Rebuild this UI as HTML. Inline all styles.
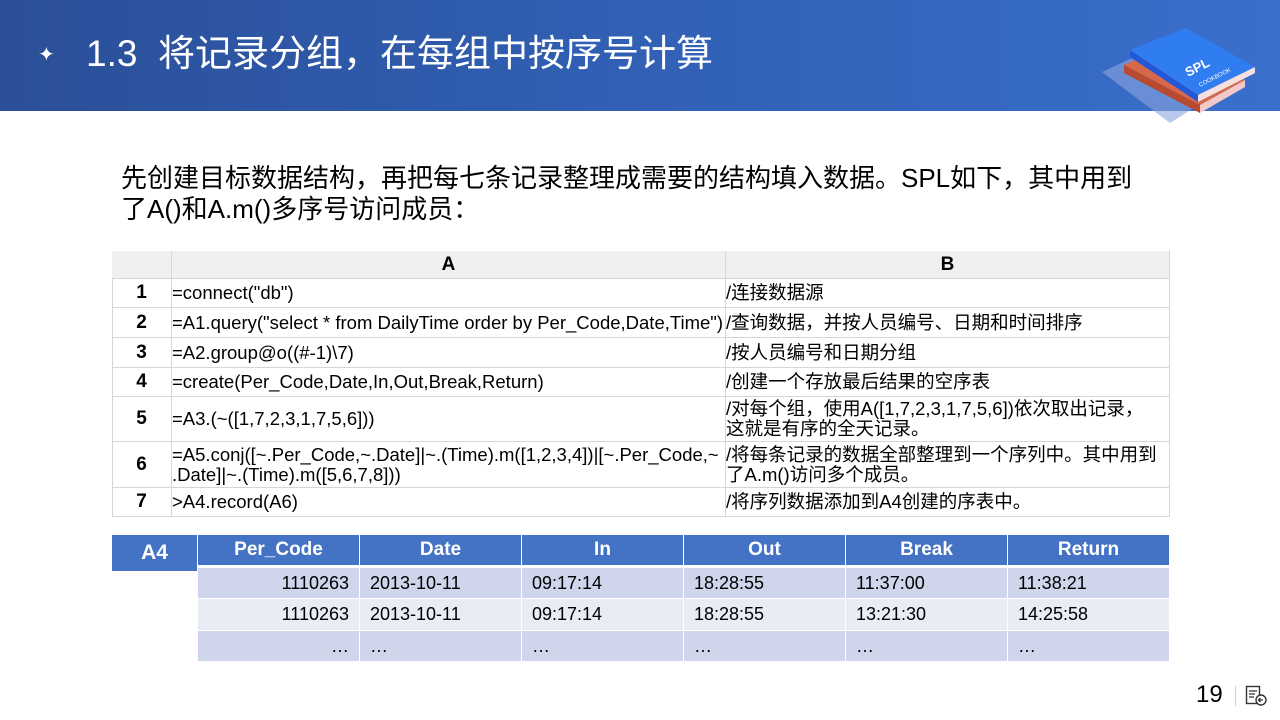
<!DOCTYPE html>
<html><head><meta charset="utf-8"><style>
*{margin:0;padding:0;box-sizing:border-box}
body{width:1280px;height:720px;overflow:hidden;background:#fff;position:relative;font-family:"Liberation Sans","Noto Sans CJK SC",sans-serif;color:#000}
.hdr{position:absolute;left:0;top:0;width:1280px;height:111px;background:linear-gradient(90deg,#2b4f98 0%,#3160b5 50%,#3a6fcc 100%)}
.title{position:absolute;left:86px;top:30px;color:#fff;font-size:37px;line-height:48px;white-space:nowrap}
.star{position:absolute;left:38px;top:42px;color:#fff;font-size:20px}
.p{position:absolute;left:121px;top:163px;font-size:26px;line-height:31px;width:1045px}
.c{position:absolute;font-size:18.5px;line-height:20px;display:flex;align-items:center;border-right:1px solid #d6d6d6;border-bottom:1px solid #d6d6d6;white-space:nowrap;overflow:visible}
.n{justify-content:center;font-weight:bold;font-size:19px}
.g{background:#f0f0f0;justify-content:center;font-weight:bold;font-size:19px}
.t{position:absolute;font-size:18px;display:flex;align-items:center;padding:0 10px}
.h{background:#4472c4;color:#fff;font-weight:bold;justify-content:center;font-size:19px}
.r1{background:#cfd5ea}.r2{background:#e9ebf5}
</style></head><body>
<div class="hdr"></div>
<div class="star">✦</div>
<div class="title">1.3&nbsp; 将记录分组，在每组中按序号计算</div>
<svg style="position:absolute;left:1100px;top:15px" width="160" height="110" viewBox="0 0 160 110">
<polygon points="2,57 60,30 130,70 70,108" fill="#8aa5e0" opacity="0.6"/>
<polygon points="24,50 70,30 145,65 100,90" fill="#d8684a"/>
<polygon points="24,50 100,90 100,98 24,58" fill="#b84a30"/>
<polygon points="100,90 145,65 145,72 100,98" fill="#f2c8c8"/>
<polygon points="30,35 86,13 155,52 98,80" fill="#2f7df0"/>
<polygon points="30,35 98,80 98,87 30,42" fill="#2258d8"/>
<polygon points="98,80 155,52 155,58 98,87" fill="#f5e0e0"/>
<text x="88" y="62" fill="#fff" font-size="13" font-weight="bold" transform="rotate(-27 88 62)" font-family="Liberation Sans">SPL</text>
<text x="100" y="72" fill="#fff" font-size="6" transform="rotate(-27 100 72)" font-family="Liberation Sans">COOKBOOK</text>
</svg>
<div class="p">先创建目标数据结构，再把每七条记录整理成需要的结构填入数据。SPL如下，其中用到<br>了A()和A.m()多序号访问成员：</div>
<div style="position:absolute;left:112px;top:251px;width:1058px;height:266px;border-top:1px solid #d6d6d6;border-left:1px solid #d6d6d6"></div>
<div class="c g" style="left:112px;top:251px;width:60px;height:28px"></div>
<div class="c g" style="left:172px;top:251px;width:554px;height:28px">A</div>
<div class="c g" style="left:726px;top:251px;width:444px;height:28px">B</div>

<div class="c n" style="left:112px;top:279px;width:60px;height:29px">1</div>
<div class="c" style="left:172px;top:279px;width:554px;height:29px">=connect("db")</div>
<div class="c" style="left:726px;top:279px;width:444px;height:29px">/连接数据源</div>

<div class="c n" style="left:112px;top:308px;width:60px;height:30px">2</div>
<div class="c" style="left:172px;top:308px;width:554px;height:30px">=A1.query("select * from DailyTime order by Per_Code,Date,Time")</div>
<div class="c" style="left:726px;top:308px;width:444px;height:30px">/查询数据，并按人员编号、日期和时间排序</div>

<div class="c n" style="left:112px;top:338px;width:60px;height:30px">3</div>
<div class="c" style="left:172px;top:338px;width:554px;height:30px">=A2.group@o((#-1)\7)</div>
<div class="c" style="left:726px;top:338px;width:444px;height:30px">/按人员编号和日期分组</div>

<div class="c n" style="left:112px;top:368px;width:60px;height:29px">4</div>
<div class="c" style="left:172px;top:368px;width:554px;height:29px">=create(Per_Code,Date,In,Out,Break,Return)</div>
<div class="c" style="left:726px;top:368px;width:444px;height:29px">/创建一个存放最后结果的空序表</div>

<div class="c n" style="left:112px;top:397px;width:60px;height:45px">5</div>
<div class="c" style="left:172px;top:397px;width:554px;height:45px">=A3.(~([1,7,2,3,1,7,5,6]))</div>
<div class="c" style="left:726px;top:397px;width:444px;height:45px">/对每个组，使用A([1,7,2,3,1,7,5,6])依次取出记录，<br>这就是有序的全天记录。</div>

<div class="c n" style="left:112px;top:442px;width:60px;height:46px">6</div>
<div class="c" style="left:172px;top:442px;width:554px;height:46px">=A5.conj([~.Per_Code,~.Date]|~.(Time).m([1,2,3,4])|[~.Per_Code,~<br>.Date]|~.(Time).m([5,6,7,8]))</div>
<div class="c" style="left:726px;top:442px;width:444px;height:46px">/将每条记录的数据全部整理到一个序列中。其中用到<br>了A.m()访问多个成员。</div>

<div class="c n" style="left:112px;top:488px;width:60px;height:29px">7</div>
<div class="c" style="left:172px;top:488px;width:554px;height:29px">&gt;A4.record(A6)</div>
<div class="c" style="left:726px;top:488px;width:444px;height:29px">/将序列数据添加到A4创建的序表中。</div>

<div class="t h" style="left:112px;top:535px;width:85px;height:36px;font-size:21px">A4</div>
<div class="t h" style="left:198px;top:535px;width:161px;height:30px">Per_Code</div>
<div class="t h" style="left:360px;top:535px;width:161px;height:30px">Date</div>
<div class="t h" style="left:522px;top:535px;width:161px;height:30px">In</div>
<div class="t h" style="left:684px;top:535px;width:161px;height:30px">Out</div>
<div class="t h" style="left:846px;top:535px;width:161px;height:30px">Break</div>
<div class="t h" style="left:1008px;top:535px;width:161px;height:30px">Return</div>

<div class="t r1" style="left:198px;top:568px;width:161px;height:30px;justify-content:flex-end">1110263</div>
<div class="t r1" style="left:360px;top:568px;width:161px;height:30px">2013-10-11</div>
<div class="t r1" style="left:522px;top:568px;width:161px;height:30px">09:17:14</div>
<div class="t r1" style="left:684px;top:568px;width:161px;height:30px">18:28:55</div>
<div class="t r1" style="left:846px;top:568px;width:161px;height:30px">11:37:00</div>
<div class="t r1" style="left:1008px;top:568px;width:161px;height:30px">11:38:21</div>

<div class="t r2" style="left:198px;top:599px;width:161px;height:31px;justify-content:flex-end">1110263</div>
<div class="t r2" style="left:360px;top:599px;width:161px;height:31px">2013-10-11</div>
<div class="t r2" style="left:522px;top:599px;width:161px;height:31px">09:17:14</div>
<div class="t r2" style="left:684px;top:599px;width:161px;height:31px">18:28:55</div>
<div class="t r2" style="left:846px;top:599px;width:161px;height:31px">13:21:30</div>
<div class="t r2" style="left:1008px;top:599px;width:161px;height:31px">14:25:58</div>

<div class="t r1" style="left:198px;top:631px;width:161px;height:30px;justify-content:flex-end">…</div>
<div class="t r1" style="left:360px;top:631px;width:161px;height:30px">…</div>
<div class="t r1" style="left:522px;top:631px;width:161px;height:30px">…</div>
<div class="t r1" style="left:684px;top:631px;width:161px;height:30px">…</div>
<div class="t r1" style="left:846px;top:631px;width:161px;height:30px">…</div>
<div class="t r1" style="left:1008px;top:631px;width:161px;height:30px">…</div>

<div style="position:absolute;left:1196px;top:680px;font-size:24px;line-height:30px">19</div>
<div style="position:absolute;left:1235px;top:686px;width:1px;height:20px;background:#ccd"></div>
<svg style="position:absolute;left:1245px;top:685px" width="24" height="22" viewBox="0 0 24 22"><rect x="1.5" y="1.5" width="13" height="17" fill="none" stroke="#333" stroke-width="1.4"/><path d="M4 6h8M4 9h6M4 12h5" stroke="#333" stroke-width="1.3"/><circle cx="16" cy="15" r="5" fill="#fff" stroke="#333" stroke-width="1.4"/><path d="M18 15h-4M15.5 13l-2 2 2 2" stroke="#333" stroke-width="1.3" fill="none"/></svg>
</body></html>
